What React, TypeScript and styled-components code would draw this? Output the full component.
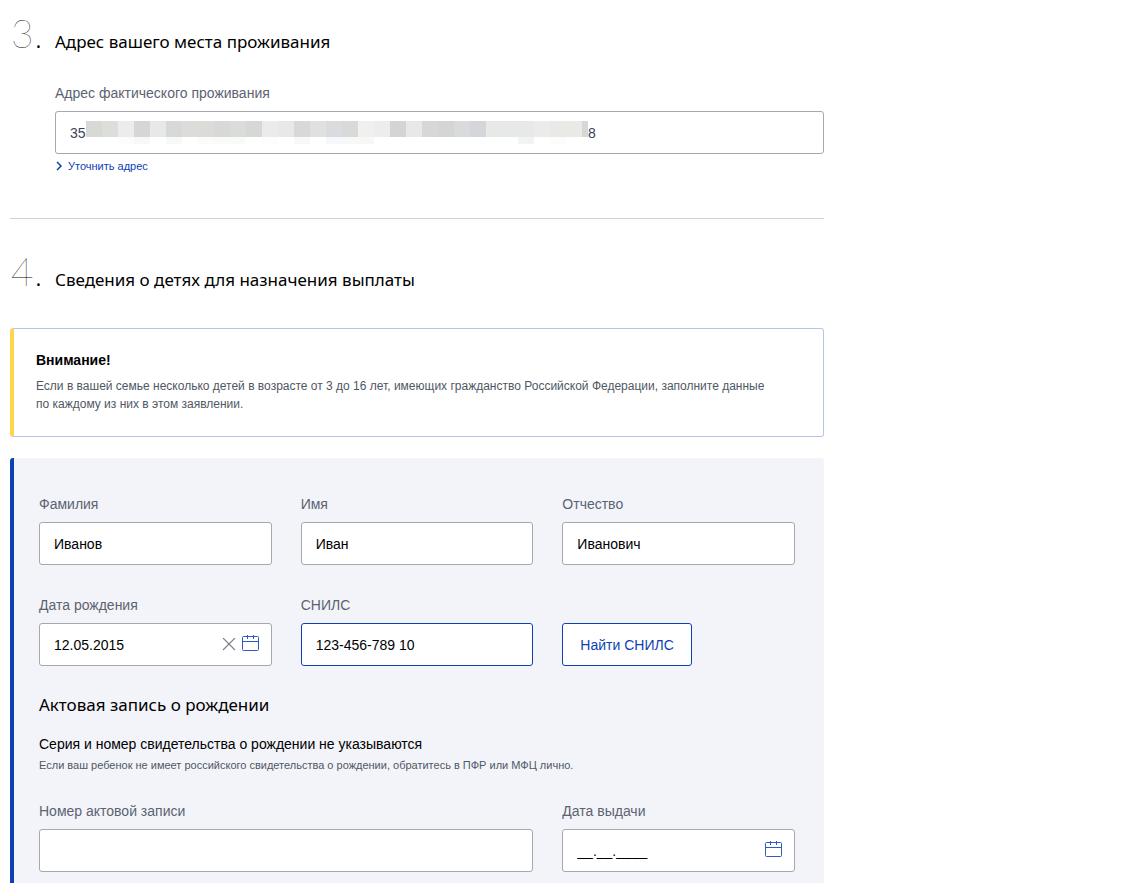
import React, { useState } from "react";
import styled, { createGlobalStyle } from "styled-components";

const blue = "#0d41b3";
const sans = '"Liberation Sans", Arial, sans-serif';
const display = '"Noto Sans", "Open Sans", sans-serif';

const GlobalStyle = createGlobalStyle`
  * { box-sizing: border-box; }
  body {
    margin: 0;
    background: #fff;
    color: #000;
    font-family: ${sans};
    font-size: 14px;
    line-height: 20px;
  }
  h2, h3, p { margin: 0; }
`;

const Page = styled.main`
  width: 100%;
  max-width: 834px;
  padding: 0 10px;
`;

const Section = styled.section<{ $divided?: boolean }>`
  display: flex;
  flex-direction: column;
  padding-top: ${(p) => (p.$divided ? 9 : 28)}px;
  padding-bottom: ${(p) => (p.$divided ? 44 : 0)}px;
  border-bottom: ${(p) => (p.$divided ? "1px solid #cfd0d2" : "none")};
`;

const SectionHead = styled.header`
  display: flex;
  align-items: baseline;
`;

const SectionNumber = styled.span`
  display: flex;
  align-items: baseline;
  flex: 0 0 45px;
  padding-left: 1px;
  font: 200 39px/48px Lato, sans-serif;
`;

const NumberDot = styled.span`
  margin-left: 2px;
  font: 400 20px/24px ${display};
`;

const SectionTitle = styled.h2`
  font: 400 17px/24px ${display};
`;

const AddressBlock = styled.div`
  display: flex;
  flex-direction: column;
  align-items: stretch;
  margin: 26px 0 0 45px;
`;

const Label = styled.label`
  color: #5b6370;
  font-size: 14px;
  line-height: 20px;
  margin-bottom: 8px;
`;

const Box = styled.div<{ $active?: boolean }>`
  display: flex;
  align-items: center;
  height: 43px;
  padding: 0 11px 0 14px;
  background: #fff;
  border: 1px solid ${(p) => (p.$active ? blue : "#a5a8ad")};
  border-radius: 3px;
`;

const Input = styled.input`
  flex: 1 1 0;
  min-width: 0;
  height: 100%;
  padding: 0;
  border: 0;
  outline: 0;
  background: transparent;
  color: #000;
  font: 14px/20px ${sans};
`;

const AddressPart = styled(Input)<{ $width: number }>`
  flex: 0 0 ${(p) => p.$width}px;
  color: #3b4256;
`;

const Mosaic = styled.svg`
  flex: 0 1 502px;
  min-width: 0;
  height: 23px;
`;

const MoreLink = styled.a`
  display: flex;
  align-items: center;
  align-self: flex-start;
  gap: 5px;
  margin-top: 4px;
  color: ${blue};
  font-size: 11px;
  line-height: 16px;
  text-decoration: none;
`;

const Notice = styled.aside`
  margin-top: 33px;
  padding: 21px 20px 23px 22px;
  border: 1px solid #b5c5e8;
  border-left: 4px solid #ffd54a;
  border-radius: 3px;
`;

const NoticeTitle = styled.p`
  font-weight: 700;
  line-height: 20px;
`;

const NoticeText = styled.p`
  margin-top: 7px;
  color: #4f5765;
  font-size: 12px;
  line-height: 18px;
`;

const ChildPanel = styled.form`
  display: flex;
  flex-direction: column;
  margin-top: 21px;
  padding: 36px 29px 11px 25px;
  background: #f3f4fa;
  border-left: 4px solid ${blue};
  border-radius: 3px 3px 0 0;
`;

const FieldGrid = styled.div`
  display: grid;
  grid-template-columns: repeat(3, minmax(0, 1fr));
  gap: 30px 29px;
`;

const Field = styled.div<{ $span?: number }>`
  display: flex;
  flex-direction: column;
  grid-column: span ${(p) => p.$span ?? 1};
`;

const IconButton = styled.button`
  display: flex;
  padding: 0;
  margin-left: 4px;
  border: 0;
  background: none;
  cursor: pointer;
`;

const OutlineButton = styled.button`
  align-self: end;
  justify-self: start;
  height: 43px;
  padding: 0 17px;
  border: 1px solid ${blue};
  border-radius: 3px;
  background: #fff;
  color: ${blue};
  font: 14px/20px ${sans};
  white-space: nowrap;
  cursor: pointer;
`;

const RecordHead = styled.div`
  display: flex;
  flex-direction: column;
  margin: 27px 0 28px;
`;

const RecordTitle = styled.h3`
  font: 400 17px/24px ${display};
`;

const RecordText = styled.p`
  margin-top: 17px;
`;

const RecordHint = styled.p`
  margin-top: 3px;
  color: #4f5765;
  font-size: 11px;
  line-height: 16px;
`;

const topTiles = [
  "#d7d9d5", "#dcdedc", "#ececec", "#d6d6d6", "#e7e9e7", "#d6d9d7", "#dcdcd9", "#dbdcda",
  "#d7d9d7", "#dadcda", "#d6d8d6", "#ebebeb", "#e8e8e8", "#d8d8d7", "#dfe0df", "#d9dbde",
  "#d7dad8", "#f0f0ed", "#ededed", "#d4d4d4", "#e8e8e8", "#d7d7d7", "#d4d6d4", "#d8dadc",
  "#d5d6d9", "#e7e9e7", "#e7e9e8", "#e6e9e7", "#ebebeb", "#e9e9e6", "#e8eae8", "#d7d8d6",
];

const bottomTiles: Record<number, string> = {
  2: "#fcfcfa", 3: "#f8f8f8", 5: "#f7f9f8", 7: "#fbfbf9", 8: "#fafafa", 9: "#fafafa",
  11: "#fdfdfd", 13: "#f8f8f8", 15: "#f7f8fa", 16: "#f6f9f7", 17: "#f7f7f7",
  27: "#f3f3f3", 29: "#fcfcfc",
};

function HiddenAddress() {
  return (
    <Mosaic viewBox="0 0 502 23" preserveAspectRatio="none" shapeRendering="crispEdges" aria-hidden="true">
      {topTiles.map((fill, i) => (
        <rect key={i} x={i * 16} y={0} width={16} height={16} fill={fill} />
      ))}
      {Object.entries(bottomTiles).map(([i, fill]) => (
        <rect key={i} x={Number(i) * 16} y={16} width={16} height={7} fill={fill} />
      ))}
    </Mosaic>
  );
}

function CalendarIcon() {
  return (
    <svg width="20" height="20" viewBox="0 0 20 20" fill="none" stroke="#2f5ac4" aria-hidden="true">
      <rect x="2.5" y="1.5" width="16" height="14" rx="1" />
      <path d="M2.5 6.5h16M7.5 0v4M13.5 0v4" />
    </svg>
  );
}

function ClearIcon() {
  return (
    <svg width="14" height="14" viewBox="0 0 14 14" fill="none" stroke="#7d828b" strokeWidth="1.2" aria-hidden="true">
      <path d="M1 0l12 12M13 0L1 12" />
    </svg>
  );
}

function ChevronIcon() {
  return (
    <svg width="8" height="10" viewBox="0 0 8 10" fill="none" stroke={blue} strokeWidth="1.5" aria-hidden="true">
      <path d="M2 1l4 4-4 4" />
    </svg>
  );
}

function Heading({ number, children }: { number: number; children: React.ReactNode }) {
  return (
    <SectionHead>
      <SectionNumber>
        {number}
        <NumberDot>.</NumberDot>
      </SectionNumber>
      <SectionTitle>{children}</SectionTitle>
    </SectionHead>
  );
}

type TextFieldProps = {
  id: string;
  label: string;
  initial?: string;
  span?: number;
  active?: boolean;
  date?: boolean;
  clearable?: boolean;
};

function TextField({ id, label, initial = "", span, active, date, clearable }: TextFieldProps) {
  const [value, setValue] = useState(initial);
  return (
    <Field $span={span}>
      <Label htmlFor={id}>{label}</Label>
      <Box $active={active}>
        <Input id={id} value={value} onChange={(e) => setValue(e.target.value)} />
        {clearable && (
          <IconButton type="button" aria-label="Очистить" onClick={() => setValue("")}>
            <ClearIcon />
          </IconButton>
        )}
        {date && (
          <IconButton type="button" aria-label="Открыть календарь">
            <CalendarIcon />
          </IconButton>
        )}
      </Box>
    </Field>
  );
}

export default function App() {
  return (
    <>
      <GlobalStyle />
      <Page>
        <Section $divided>
          <Heading number={3}>Адрес вашего места проживания</Heading>
          <AddressBlock>
            <Label htmlFor="address">Адрес фактического проживания</Label>
            <Box>
              <AddressPart id="address" $width={16} defaultValue="35" />
              <HiddenAddress />
              <AddressPart aria-label="Окончание адреса" $width={8} defaultValue="8" />
            </Box>
            <MoreLink href="#address">
              <ChevronIcon />
              Уточнить адрес
            </MoreLink>
          </AddressBlock>
        </Section>
        <Section>
          <Heading number={4}>Сведения о детях для назначения выплаты</Heading>
          <Notice>
            <NoticeTitle>Внимание!</NoticeTitle>
            <NoticeText>
              Если в вашей семье несколько детей в возрасте от 3 до 16 лет, имеющих гражданство Российской Федерации,
              заполните данные
              <br />
              по каждому из них в этом заявлении.
            </NoticeText>
          </Notice>
          <ChildPanel>
            <FieldGrid>
              <TextField id="surname" label="Фамилия" initial="Иванов" />
              <TextField id="name" label="Имя" initial="Иван" />
              <TextField id="patronymic" label="Отчество" initial="Иванович" />
              <TextField id="birth" label="Дата рождения" initial="12.05.2015" date clearable />
              <TextField id="snils" label="СНИЛС" initial="123-456-789 10" active />
              <OutlineButton type="button">Найти СНИЛС</OutlineButton>
            </FieldGrid>
            <RecordHead>
              <RecordTitle>Актовая запись о рождении</RecordTitle>
              <RecordText>Серия и номер свидетельства о рождении не указываются</RecordText>
              <RecordHint>
                Если ваш ребенок не имеет российского свидетельства о рождении, обратитесь в ПФР или МФЦ лично.
              </RecordHint>
            </RecordHead>
            <FieldGrid>
              <TextField id="record" label="Номер актовой записи" span={2} />
              <TextField id="issued" label="Дата выдачи" initial="__.__.____" date />
            </FieldGrid>
          </ChildPanel>
        </Section>
      </Page>
    </>
  );
}
